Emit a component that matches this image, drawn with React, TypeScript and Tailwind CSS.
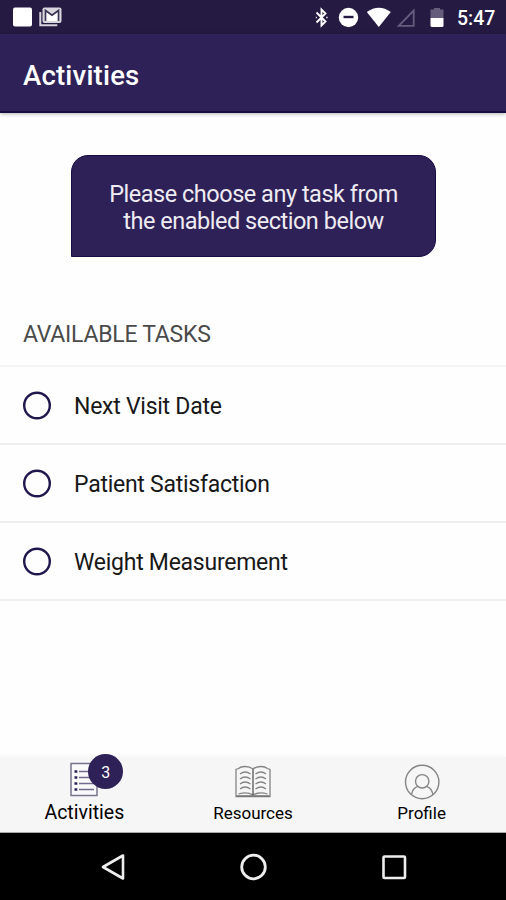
import { useState } from 'react';

const TASKS = ['Next Visit Date', 'Patient Satisfaction', 'Weight Measurement'];

function StatusBar() {
  return (
    <div className="flex h-[34px] shrink-0 items-center justify-between bg-[#251a42] pl-[13px] pr-[11px] text-white">
      <svg width="50" height="22" viewBox="0 0 50 22">
        <rect x="0" y="1.5" width="19" height="19" rx="2" fill="#fff" />
        <path d="M27.3 6v13.3h17" fill="none" stroke="#d5d2dc" strokeWidth="2" />
        <rect x="29.5" y="1.5" width="19" height="15.5" rx="2" fill="#d8d6dd" />
        <path d="M32 15V4.5l7 5 7-5V15z" fill="#fff" />
        <path d="M32.5 15V4.5l6.5 4.7 6.5-4.7V15" fill="none" stroke="#3c3454" strokeWidth="1.7" />
      </svg>
      <div className="flex items-center">
        <svg width="132" height="24" viewBox="314 5 132 24">
          <path d="M316.5 12.5l9 9-4 4V9.5l4 4-9 9" fill="none" stroke="#fff" strokeWidth="1.9" />
          <path d="M315.8 17.5h1M326.2 17.5h1.4" stroke="#fff" strokeWidth="1.6" />
          <circle cx="348.5" cy="17.5" r="9.7" fill="#fff" />
          <path d="M343.5 17h10" stroke="#251a42" strokeWidth="2.4" />
          <path d="M366.8 12q12-8.6 24 0L378.8 27z" fill="#fff" />
          <path d="M413.7 10.5v15.3h-15z" fill="none" stroke="#665c7e" strokeWidth="1.8" />
          <path d="M430.5 18V9.5h3.5V8h6v1.5h3.5V18z" fill="#655d7b" />
          <path d="M430.5 18h13v7.5q0 1.5-1.5 1.5h-10q-1.5 0-1.5-1.5z" fill="#fff" />
        </svg>
        <span className="ml-[11px] mt-[3px] w-[38px] whitespace-nowrap text-[19.5px] font-medium leading-[24px]">5:47</span>
      </div>
    </div>
  );
}

function ActivitiesIcon() {
  return (
    <svg width="30" height="36" viewBox="0 0 30 36">
      <rect x="2" y="1.5" width="26" height="32" fill="#fafafa" stroke="#77758a" strokeWidth="1.5" />
      <path d="M10 9.5h15M10 15.5h15M10 21.5h15M10 27.5h15" stroke="#706c8c" strokeWidth="1.5" />
      <path d="M5.5 9.5h2.8M5.5 15.5h2.8M5.5 21.5h2.8M5.5 27.5h2.8" stroke="#2d2157" strokeWidth="2.6" />
    </svg>
  );
}

function ResourcesIcon() {
  return (
    <svg width="36" height="34" viewBox="0 0 36 34" fill="none" stroke="#858585" strokeWidth="1.3">
      <path d="M18 4Q15 1.5 10 1.5 5.5 1.5 3.5 3.5L1 4.5V31.5H35V4.5L32.5 3.5Q30 1.5 26 1.5 21 1.5 18 4" />
      <path d="M3.5 29Q12 26.5 18 30 24 26.5 32.5 29" />
      <path d="M18 4V30" stroke="#555" />
      <path d="M5 9Q10 5 15.5 9M5 14Q10 10 15.5 14M5 19Q10 15 15.5 19M5 24Q10 20 15.5 24" />
      <path d="M20.5 9Q26 5 31 9M20.5 14Q26 10 31 14M20.5 19Q26 15 31 19M20.5 24Q26 20 31 24" />
      <path d="M1.5 31.2H34.5" stroke="#777" strokeWidth="1.8" />
    </svg>
  );
}

function ProfileIcon() {
  return (
    <svg width="36" height="36" viewBox="0 0 36 36" fill="none" stroke="#858585" strokeWidth="1.4">
      <circle cx="18.2" cy="18" r="16.7" />
      <circle cx="18.2" cy="17.3" r="6.7" />
      <path d="M7.5 30.5Q8.5 24 14 22.3M22.4 22.3Q27.8 24 28.9 30.5" />
    </svg>
  );
}

export default function App() {
  const [done, setDone] = useState<string[]>([]);

  const toggle = (task: string) =>
    setDone(prev => (prev.includes(task) ? prev.filter(t => t !== task) : [...prev, task]));

  return (
    <div className="flex h-[900px] w-[506px] flex-col overflow-hidden bg-[#fefefe] font-['Roboto',sans-serif]">
      <StatusBar />

      {/* Header */}
      <header className="flex h-[79px] shrink-0 items-center border-b-2 border-[#160c40] bg-[#2e2157] px-[23px] pt-[7px] shadow-[0_1px_4px_rgba(0,0,0,0.3)]">
        <h1 className="text-[27.5px] font-medium leading-8 tracking-[0.2px] text-white">Activities</h1>
      </header>

      {/* Prompt */}
      <div className="ml-[71px] mt-[42px] h-[102px] w-[365px] shrink-0 rounded-[17px] rounded-bl-none border border-[#180c43] bg-[#2e2157] pt-[25px] text-center text-[23.5px] leading-[27px] tracking-[-0.48px] text-[#eeecf2]">
        Please choose any task from
        <br />
        the enabled section below
      </div>

      {/* Tasks */}
      <main className="flex-1">
        <h2 className="mt-[62px] pl-[23px] text-[23px] leading-8 tracking-[-0.25px] text-[#4a4a4a]">AVAILABLE TASKS</h2>
        <ul className="mt-[14px] border-t-2 border-[#f4f4f4]">
          {TASKS.map(task => (
            <li
              key={task}
              onClick={() => toggle(task)}
              className="flex h-[78px] items-center border-b-2 border-[#eeeeee] pl-[23px] text-[23px] tracking-[-0.26px] text-[#181818]"
            >
              <svg width="28" height="28" viewBox="0 0 28 28" className="mr-[23px] overflow-visible">
                <circle cx="14" cy="14.5" r="12.8" fill={done.includes(task) ? '#2e2157' : 'none'} stroke="#21164d" strokeWidth="2.4" />
              </svg>
              <span className="pt-[5px]">{task}</span>
            </li>
          ))}
        </ul>
      </main>

      {/* Tab bar */}
      <nav className="grid h-[76px] shrink-0 grid-cols-3 border-b border-[#aaa] bg-[#f6f6f6] text-black shadow-[0_-1px_4px_rgba(0,0,0,0.04)]">
        <div className="flex flex-col items-center pt-[5px]">
          <div className="relative h-9">
            <ActivitiesIcon />
            <span className="absolute -top-[8px] left-[19px] flex size-[35px] items-center justify-center rounded-full bg-[#2d2157] pt-[2px] text-[16px] text-white">
              {TASKS.length}
            </span>
          </div>
          <span className="mt-[3px] text-[19.5px] leading-6">Activities</span>
        </div>
        <div className="flex flex-col items-center pt-[8px]">
          <ResourcesIcon />
          <span className="mt-[2px] text-[17px] leading-6">Resources</span>
        </div>
        <div className="flex flex-col items-center pt-[7px]">
          <ProfileIcon />
          <span className="mt-px text-[17px] leading-6">Profile</span>
        </div>
      </nav>

      {/* Device buttons */}
      <div className="flex h-[67px] shrink-0 items-center justify-between bg-black px-[99px]">
        <svg width="28" height="32" viewBox="0 0 28 32" fill="none" stroke="#eee" strokeWidth="2.6" strokeLinejoin="round">
          <path d="M24 4.5v23L4 16z" />
        </svg>
        <svg width="28" height="28" viewBox="0 0 28 28" fill="none" stroke="#eee" strokeWidth="2.8">
          <circle cx="14.5" cy="14" r="11.8" />
        </svg>
        <svg width="28" height="28" viewBox="0 0 28 28" fill="none" stroke="#eee" strokeWidth="2.6">
          <rect x="4.5" y="3.5" width="21.5" height="21.5" rx="1" />
        </svg>
      </div>
    </div>
  );
}
